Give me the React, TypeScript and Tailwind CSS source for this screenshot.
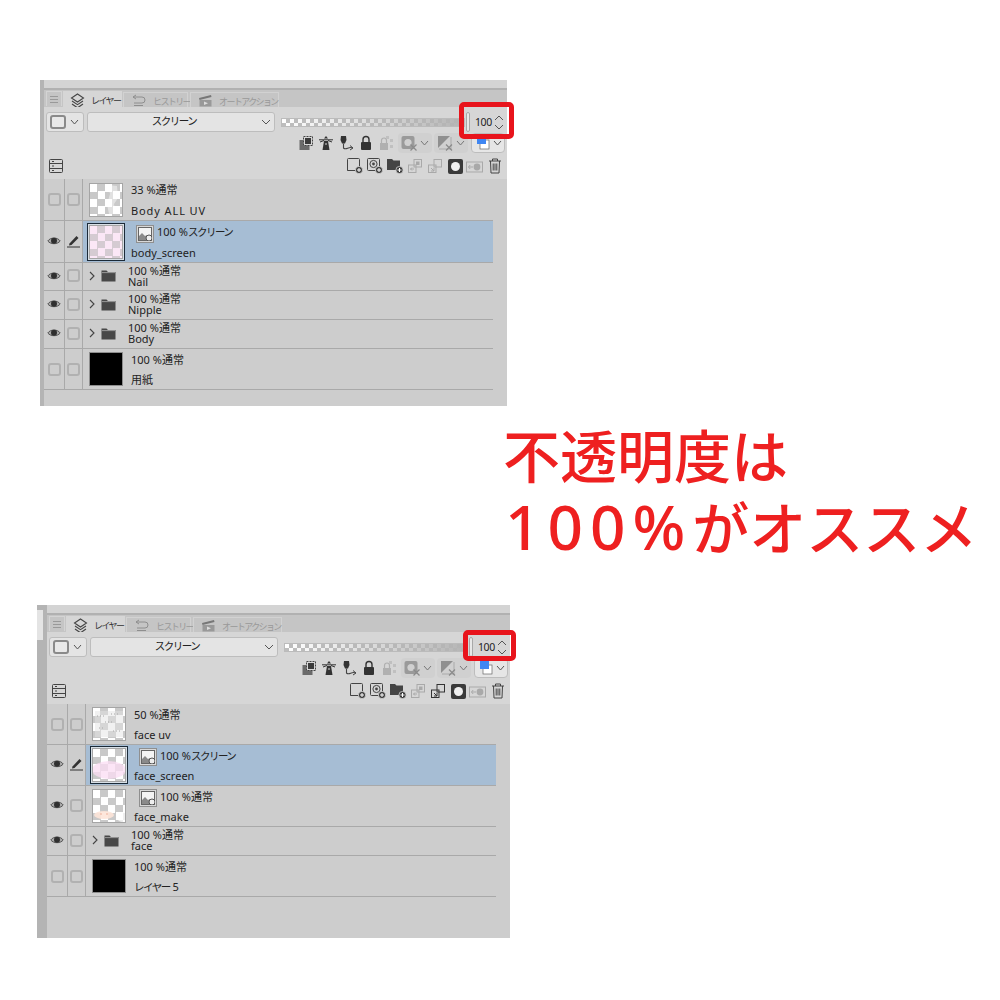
import type { ReactNode } from "react";

const line = "border-[#a9a9a9]";

function Svg({ w = 16, h = 16, children, className = "" }: { w?: number; h?: number; children: ReactNode; className?: string }) {
  return (
    <svg width={w} height={h} viewBox={`0 0 ${w} ${h}`} fill="none" className={`shrink-0 ${className}`}>
      {children}
    </svg>
  );
}

function Chevron({ up = false, color = "#555", w = 10 }: { up?: boolean; color?: string; w?: number }) {
  return (
    <Svg w={w} h={6}>
      <path d={up ? `M1 5 L${w / 2} 1 L${w - 1} 5` : `M1 1 L${w / 2} 5 L${w - 1} 1`} stroke={color} strokeWidth="1" />
    </Svg>
  );
}

function Plus({ x, y }: { x: number; y: number }) {
  return (
    <>
      <circle cx={x} cy={y} r="3.6" fill="#3c3c3c" stroke="#d6d6d6" strokeWidth="0.8" />
      <path d={`M${x - 2} ${y}h4M${x} ${y - 2}v4`} stroke="#fff" strokeWidth="1" />
    </>
  );
}

function Cross({ x, y, color = "#8a8a8a" }: { x: number; y: number; color?: string }) {
  return <path d={`M${x - 3} ${y - 3}l6 6M${x + 3} ${y - 3}l-6 6`} stroke={color} strokeWidth="1.2" />;
}

function LayersIcon() {
  return (
    <Svg w={15} h={16}>
      <path d="M7.5 1 L13.5 5 L7.5 9 L1.5 5 Z" stroke="#444" strokeWidth="1.1" />
      <path d="M2 8 L7.5 11.6 L13 8M2 11 L7.5 14.8 L13 11" stroke="#444" strokeWidth="1.1" />
    </Svg>
  );
}

function HistoryIcon() {
  return (
    <Svg w={15} h={13}>
      <path d="M5 1 L2 3 L5 5M2 3 H11 a3 3 0 0 1 0 6 H3 M3 11.5 H12" stroke="#8e8e8e" strokeWidth="1" />
    </Svg>
  );
}

function ActionIcon() {
  return (
    <Svg w={15} h={13}>
      <path d="M1 4 L13 1 L13.5 3 L1.5 6 Z" fill="#777" />
      <rect x="1.5" y="6" width="12" height="6.5" fill="#999" />
      <path d="M6 7.5 L10 9.2 L6 11 Z" fill="#ddd" />
    </Svg>
  );
}

function EyeIcon() {
  return (
    <Svg w={14} h={10}>
      <path d="M0.8 5 C3.5 1 10.5 1 13.2 5 C10.5 8.6 3.5 8.6 0.8 5 Z" stroke="#555" strokeWidth="1" fill="#aaa" />
      <circle cx="7" cy="4.7" r="3" fill="#2f2f2f" />
    </Svg>
  );
}

function PenIcon() {
  return (
    <Svg w={15} h={14}>
      <path d="M3.5 9.5 L10.5 2 L12.5 4 L5.5 11 L3 11.5 Z" fill="#333" />
      <path d="M1 13 H14" stroke="#333" strokeWidth="1" />
    </Svg>
  );
}

function FolderIcon() {
  return (
    <Svg w={15} h={13}>
      <path d="M0.5 1.5 H5.5 L7 3 H14.5 V12.5 H0.5 Z" fill="#484848" />
      <path d="M1 3.6 H14" stroke="#d0d0d0" strokeWidth="0.6" />
    </Svg>
  );
}

function MaskIcon() {
  return (
    <span className="flex h-[18px] w-[18px] shrink-0 items-center justify-center border border-[#8f8f8f] bg-[#d8d8d8]">
      <Svg w={14} h={14}>
        <rect x="0.5" y="0.5" width="13" height="13" fill="#f4f4f4" stroke="#666" />
        <path d="M1 13 V9 L4 6 L7 9 L9 8 L13 11 V13 Z" fill="#8a8a8a" />
        <circle cx="11" cy="11" r="3" fill="#eee" stroke="#555" />
      </Svg>
    </span>
  );
}

function EmptyBox() {
  return <span className="block h-[13px] w-[13px] rounded-[3px] border-2 border-[#b1b1b1]" />;
}

// katakana in the app's UI font is much narrower than the kanji
function Narrow({ text }: { text: string }) {
  return (
    <>
      {text.split(/([ァ-ヶー]+)/).map((part, i) =>
        /[ァ-ヶー]/.test(part) ? (
          <span key={i} className="text-[10.5px] tracking-[-1.5px]">
            {part}
          </span>
        ) : (
          part
        ),
      )}
    </>
  );
}

type ThumbKind = "uv" | "faceUv" | "pink" | "facePink" | "faceMake" | "black";

function Thumb({ kind }: { kind: ThumbKind }) {
  const checker =
    "bg-[repeating-conic-gradient(#c9c9c9_0_25%,#ffffff_0_50%)] bg-[length:15px_15px]";
  if (kind === "black") {
    return <div className="h-[34px] w-[34px] border border-[#8d8d8d] bg-black" />;
  }
  if (kind === "pink") {
    return (
      <div className="h-[34px] w-[34px] border border-[#a5a5a5] bg-[repeating-conic-gradient(#d5cbd2_0_25%,#fbe7f6_0_50%)] bg-[length:15px_15px]" />
    );
  }
  return (
    <div className={`relative h-[34px] w-[34px] overflow-hidden border border-[#a5a5a5] ${checker}`}>
      <svg width="32" height="32" viewBox="0 0 32 32" className="absolute inset-0">
        {kind === "uv" && (
          <path d="M18 1 L27 2 L28 14 L24 20 L26 30 L19 30 L17 20 L20 10 Z" fill="#fff" opacity="0.45" />
        )}
        {kind === "faceUv" && (
          <>
            <rect x="2" y="3" width="28" height="26" fill="#e4e4e4" opacity="0.5" />
            <path d="M4 8h8M18 6h9M6 20h6M20 23h7M12 14h8" stroke="#a8a8a8" strokeWidth="1" strokeDasharray="1 2" />
          </>
        )}
        {kind === "facePink" && <ellipse cx="16" cy="21" rx="17" ry="9" fill="#fbdcf3" opacity="0.75" />}
        {kind === "faceMake" && (
          <>
            <ellipse cx="11" cy="25" rx="10" ry="4" fill="#fde4d8" opacity="0.9" />
            <path d="M7 24h2M13 24h2" stroke="#eeb09a" strokeWidth="1" />
            <ellipse cx="29" cy="27" rx="5" ry="5" fill="#fff" opacity="0.7" />
          </>
        )}
      </svg>
    </div>
  );
}

type Row = {
  type: "layer" | "folder";
  mode: string;
  name: string;
  heightClass: string;
  eye?: boolean;
  pen?: boolean;
  selected?: boolean;
  mask?: boolean;
  thumb?: ThumbKind;
  spaced?: boolean;
  tight?: boolean;
};

function LayerRow({ row }: { row: Row }) {
  const lift = row.eye ? "pb-[2px]" : "";
  return (
    <div className={`flex w-[449px] border-b ${line} ${row.heightClass} ${row.selected ? "bg-[#a6bdd4]" : ""}`}>
      <div className={`flex w-[21px] shrink-0 items-center justify-center border-r bg-[#cdcdcd] ${line} ${lift}`}>
        {row.eye ? <EyeIcon /> : <EmptyBox />}
      </div>
      <div className={`flex w-[18px] shrink-0 items-center justify-center border-r bg-[#cdcdcd] ${line} ${lift}`}>
        {row.pen ? <PenIcon /> : <EmptyBox />}
      </div>
      {row.type === "folder" ? (
        <div className="flex min-w-0 flex-1 items-center pb-[2px] pl-[5px]">
          <span className="w-[13px] pl-[1px]">
            <Svg w={6} h={10}>
              <path d="M1 1 L5 5 L1 9" stroke="#444" strokeWidth="1.1" />
            </Svg>
          </span>
          <FolderIcon />
          <div className="ml-[12px] flex flex-col text-[11px] leading-[11px] text-[#222]">
            <span>{row.mode}</span>
            <span>{row.name}</span>
          </div>
        </div>
      ) : (
        <div className="flex min-w-0 flex-1 items-center pl-[6px]">
          {row.selected ? (
            <div className="-ml-[2px] mr-[6px] border border-[#1b2a38] bg-[#d8dfe6] p-[1px]">
              <Thumb kind={row.thumb ?? "uv"} />
            </div>
          ) : (
            <div className="mr-[8px]">
              <Thumb kind={row.thumb ?? "uv"} />
            </div>
          )}
          <div className={`flex flex-col text-[11px] leading-[14px] text-[#222] ${row.tight ? "mb-[1px]" : ""}`}>
            {row.mask ? (
              <div className="flex h-[20px] items-center">
                <span className="ml-[5px] mr-[3px]">
                  <MaskIcon />
                </span>
                <span className="-mt-[3px]">
                  <Narrow text={row.mode} />
                </span>
              </div>
            ) : (
              <span className="mt-[2px] h-[18px]">
                <Narrow text={row.mode} />
              </span>
            )}
            <span className={`${row.mask || row.tight ? "mt-[2px]" : "mt-[3px]"} ${row.spaced ? "tracking-[0.9px]" : ""}`}>
              <Narrow text={row.name} />
            </span>
          </div>
        </div>
      )}
    </div>
  );
}

function IconSlot({ children }: { children: ReactNode }) {
  return <span className="flex w-5 shrink-0 items-center justify-center">{children}</span>;
}

function ToolRowTop() {
  return (
    <div className="flex h-[20px] items-center justify-end">
      <IconSlot>
        <Svg>
          <rect x="1.5" y="5" width="10" height="10" fill="#6a6a6a" />
          <rect x="5.5" y="1.5" width="9" height="9" fill="#d6d6d6" stroke="#444" strokeDasharray="2 1" />
          <rect x="7" y="3" width="6" height="6" fill="#3a3a3a" />
        </Svg>
      </IconSlot>
      <IconSlot>
        <Svg>
          <path d="M8 1 L10 3.5 H6 Z" fill="#333" />
          <path d="M1 4.8 H15 M2 7 L6 5.5 M14 7 L10 5.5" stroke="#333" />
          <path d="M6 6 H10 L11.5 15 H4.5 Z" fill="#333" />
          <path d="M7 9h2" stroke="#d6d6d6" />
        </Svg>
      </IconSlot>
      <IconSlot>
        <Svg>
          <path d="M3 1 H8 L8.5 5 L7 8.5 H4 L2.5 5 Z" fill="#333" />
          <path d="M5.5 8.5 V13 C8 15.5 11 11 14.5 13" stroke="#444" strokeWidth="1.1" />
          <path d="M12 10.5 L15 13 L12 15" stroke="#444" />
        </Svg>
      </IconSlot>
      <IconSlot>
        <Svg>
          <path d="M5 7 V4.5 a3 3 0 0 1 6 0 V7" stroke="#333" strokeWidth="1.4" />
          <rect x="3" y="7" width="10" height="8" rx="1" fill="#333" />
        </Svg>
      </IconSlot>
      <IconSlot>
        <Svg>
          <path d="M3.5 8 V5.5 a2.5 2.5 0 0 1 5 0 V8" stroke="#b0b0b0" strokeWidth="1.2" />
          <rect x="2" y="8" width="8" height="7" fill="#b0b0b0" />
          <path d="M8 1h3v3H8zM12 4h3v3h-3zM12 10h3v3h-3z" fill="#c0c0c0" />
        </Svg>
      </IconSlot>
      <span className="ml-[2px] flex h-[20px] w-[34px] items-center gap-[3px] rounded-sm bg-[#d0d0d0] pl-[3px]">
        <Svg>
          <rect x="0.5" y="1" width="13" height="13" rx="2" fill="#9a9a9a" />
          <circle cx="7" cy="7.5" r="3.6" fill="#d0d0d0" />
          <Cross x={12.5} y={12.5} />
        </Svg>
        <Chevron color="#777" w={9} />
      </span>
      <span className="ml-[2px] flex h-[20px] w-[34px] items-center gap-[3px] rounded-sm bg-[#d0d0d0] pl-[3px]">
        <Svg>
          <path d="M1 1 H13 L1 13 Z" fill="#8f8f8f" />
          <path d="M14 2 V14 H2" stroke="#aaa" />
          <Cross x={12} y={12.5} />
        </Svg>
        <Chevron color="#777" w={9} />
      </span>
      <span className="ml-[3px] flex h-[20px] w-[34px] items-center gap-[3px] rounded-sm border border-[#bdbdbd] bg-[#e6e6e6] pl-[5px]">
        <Svg w={13} h={14}>
          <rect x="3" y="4" width="9" height="9" fill="#fff" stroke="#666" strokeWidth="0.7" />
          <rect x="0" y="0" width="9" height="8" fill="#3f86f2" />
        </Svg>
        <Chevron w={9} />
      </span>
    </div>
  );
}

function ToolRowBottom({ mergeActive }: { mergeActive: boolean }) {
  const fade = "#a9a9a9";
  const merge = mergeActive ? "#333" : fade;
  return (
    <div className="flex h-[20px] items-center justify-between pl-[2px]">
      <Svg>
        <rect x="1.5" y="1.5" width="13" height="13" rx="1" stroke="#444" />
        <path d="M2 5.5h12M2 10.5h12" stroke="#444" />
        <path d="M4 3.5h2M4 8h2M4 12.5h2" stroke="#444" />
      </Svg>
      <div className="flex items-center">
        <IconSlot>
          <Svg w={18} h={18}>
            <rect x="1.5" y="1.5" width="12" height="12" rx="1" stroke="#444" />
            <path d="M1.5 10 L1.5 13.5 L6 13.5" stroke="#444" />
            <Plus x={13} y={13} />
          </Svg>
        </IconSlot>
        <IconSlot>
          <Svg w={18} h={18}>
            <rect x="1.5" y="1.5" width="12" height="12" rx="1" stroke="#444" />
            <circle cx="7.5" cy="7" r="3.6" stroke="#444" />
            <circle cx="7.5" cy="7" r="1.4" fill="#444" />
            <Plus x={13} y={13} />
          </Svg>
        </IconSlot>
        <IconSlot>
          <Svg w={18} h={18}>
            <path d="M1 2 H6 L7.5 3.5 H14 V13 H1 Z" fill="#444" />
            <Plus x={13.5} y={13} />
          </Svg>
        </IconSlot>
        <IconSlot>
          <Svg>
            <rect x="7" y="1.5" width="7.5" height="7.5" stroke={fade} />
            <rect x="9" y="3.5" width="3.5" height="3.5" fill={fade} />
            <rect x="1.5" y="7" width="7.5" height="7.5" stroke={fade} />
            <path d="M7 11 H3.5 M5 9.5 L3.5 11 L5 12.5" stroke={fade} />
          </Svg>
        </IconSlot>
        <IconSlot>
          <Svg>
            <rect x="7" y="1.5" width="7.5" height="7.5" stroke={merge} />
            <rect x="1.5" y="7" width="7.5" height="7.5" stroke={merge} />
            <path d="M4 10 L7 13 M4 13 H7 V10" stroke={merge} />
          </Svg>
        </IconSlot>
        <IconSlot>
          <span className="flex h-[15px] w-[15px] items-center justify-center rounded-[2px] bg-[#3a3a3a]">
            <span className="h-[9px] w-[9px] rounded-full bg-[#f0f0f0]" />
          </span>
        </IconSlot>
        <IconSlot>
          <Svg w={18} h={14}>
            <rect x="0.5" y="3" width="16" height="10" stroke={fade} />
            <circle cx="11" cy="8" r="3.4" fill={fade} />
            <path d="M7 8 H2.5 M4.2 6 L2.5 8 L4.2 10" stroke={fade} />
          </Svg>
        </IconSlot>
        <IconSlot>
          <Svg w={14} h={16}>
            <path d="M1 3 H13 M4.5 3 V1 H9.5 V3" stroke="#444" />
            <path d="M2.5 3 L3 15 H11 L11.5 3" stroke="#444" />
            <path d="M5.2 5.5 V12.5 M7 5.5 V12.5 M8.8 5.5 V12.5" stroke="#444" />
          </Svg>
        </IconSlot>
      </div>
    </div>
  );
}

function Panel({ rows, className, wideStrip = false, mergeActive = false }: { rows: Row[]; className: string; wideStrip?: boolean; mergeActive?: boolean }) {
  return (
    <div className={`flex w-fit text-[11px] ${className}`}>
      {wideStrip ? (
        <div className="flex w-[10px] flex-col bg-[#b4b4b4] pt-[5px]">
          <div className="h-[30px] w-[6px] bg-[#e4e4e4]" />
        </div>
      ) : (
        <div className="w-[4px] bg-[#b4b4b4]" />
      )}
      <div className="flex w-[463px] flex-col bg-[#cdcdcd]">
        <div className="h-[8px] bg-[#d4d4d4]" />
        <div className="h-[2px] bg-[#b1b1b1]" />
        {/* tab strip */}
        <div className="flex h-[17px] items-end gap-[1px] bg-[#c5c5c5] pl-[2px] text-[9px] leading-[12px] tracking-[-1.6px]">
          <div className="mb-[1px] flex h-[15px] w-[16px] items-center justify-center border border-b-0 border-[#d4d4d4]">
            <Svg w={8} h={7}>
              <path d="M0 .5h8M0 3.5h8M0 6.5h8" stroke="#999" />
            </Svg>
          </div>
          <div className="flex h-[16px] w-[59px] items-center gap-[6px] bg-[#d6d6d6] pl-[7px] text-[#333]">
            <span className="mt-[3px]">
              <LayersIcon />
            </span>
            <span className="mt-[3px] whitespace-nowrap">レイヤー</span>
          </div>
          <div className="flex h-[15px] w-[65px] items-center gap-[7px] border border-b-0 border-[#d2d2d2] pl-[7px] text-[#999]">
            <HistoryIcon />
            <span className="mt-[3px] whitespace-nowrap">ヒストリー</span>
          </div>
          <div className="ml-[1px] flex h-[15px] w-[89px] items-center gap-[6px] border border-b-0 border-[#d2d2d2] pl-[7px] text-[#999]">
            <ActionIcon />
            <span className="mt-[3px] whitespace-nowrap">オートアクション</span>
          </div>
        </div>
        {/* toolbar */}
        <div className="flex h-[72px] flex-col bg-[#d6d6d6] px-[2px] pt-[5px]">
          <div className="flex h-[20px] items-center">
            <div className="flex h-[20px] w-[38px] items-center gap-[4px] rounded-[3px] border border-[#bdbdbd] bg-[#e4e4e4] pl-[3px]">
              <span className="h-[14px] w-[16px] rounded-[3px] border-2 border-[#8a8a8a] bg-[#e8e8e8]" />
              <Chevron w={9} />
            </div>
            <div className="relative ml-[3px] flex h-[20px] w-[188px] items-center justify-center rounded-[3px] border border-[#bdbdbd] bg-[#e4e4e4] pr-[14px] text-[#222]">
              <Narrow text="スクリーン" />
              <span className="absolute right-[3px] top-[6px]">
                <Chevron w={10} />
              </span>
            </div>
            <div className="ml-[6px] h-[9px] w-[184px] border border-[#bbb] bg-[linear-gradient(90deg,rgba(214,214,214,0)_0%,#b4b4b4_100%),repeating-conic-gradient(#bdbdbd_0_25%,#fff_0_50%)] bg-[length:100%_100%,8px_8px]" />
            <span className="ml-[1px] h-[20px] w-[4px] rounded-sm border border-[#a8a8a8] bg-[#e8e8e8]" />
            <span className="ml-[5px] w-[18px] text-[10.5px] leading-[14px] tracking-[-0.4px] text-[#222]">100</span>
            <span className="ml-[1px] flex flex-col gap-[3px]">
              <Chevron up w={10} />
              <Chevron w={10} />
            </span>
          </div>
          <div className="mt-[1px]">
            <ToolRowTop />
          </div>
          <div className="mt-[3px]">
            <ToolRowBottom mergeActive={mergeActive} />
          </div>
        </div>
        {/* layer list */}
        <div className="flex flex-col">
          {rows.map((row) => (
            <LayerRow key={row.name} row={row} />
          ))}
        </div>
      </div>
    </div>
  );
}

const upperRows: Row[] = [
  { type: "layer", heightClass: "h-[42px]", mode: "33 %通常", name: "Body ALL UV", thumb: "uv", spaced: true },
  { type: "layer", heightClass: "h-[42px]", mode: "100 %スクリーン", name: "body_screen", thumb: "pink", eye: true, pen: true, selected: true, mask: true },
  { type: "folder", heightClass: "h-[28px]", mode: "100 %通常", name: "Nail", eye: true },
  { type: "folder", heightClass: "h-[29px]", mode: "100 %通常", name: "Nipple", eye: true },
  { type: "folder", heightClass: "h-[29px]", mode: "100 %通常", name: "Body", eye: true },
  { type: "layer", heightClass: "h-[41px]", mode: "100 %通常", name: "用紙", thumb: "black", tight: true },
];

const lowerRows: Row[] = [
  { type: "layer", heightClass: "h-[41px]", mode: "50 %通常", name: "face uv", thumb: "faceUv", tight: true },
  { type: "layer", heightClass: "h-[41px]", mode: "100 %スクリーン", name: "face_screen", thumb: "facePink", eye: true, pen: true, selected: true, mask: true },
  { type: "layer", heightClass: "h-[41px]", mode: "100 %通常", name: "face_make", thumb: "faceMake", eye: true, mask: true },
  { type: "folder", heightClass: "h-[29px]", mode: "100 %通常", name: "face", eye: true },
  { type: "layer", heightClass: "h-[41px]", mode: "100 %通常", name: "レイヤー 5", thumb: "black", tight: true },
];

export default function App() {
  return (
    <div className="relative h-[1000px] w-[1000px] overflow-hidden bg-white pt-[80px] font-['Noto_Sans','Noto_Sans_CJK_JP',sans-serif]">
      <Panel rows={upperRows} className="ml-[40px] h-[326px]" />
      <div className="ml-[503px] mt-[15px] h-[142px] whitespace-nowrap text-[57px] font-medium leading-[70px] text-[#ee2020]">
        <div>不透明度は</div>
        <div>
          <span className="ml-[2px] text-[62px] tracking-[7px]">100%</span>がオススメ
        </div>
      </div>
      <Panel rows={lowerRows} wideStrip mergeActive className="ml-[37px] mt-[42px] h-[333px]" />
      {/* red call-outs over the opacity field */}
      <div className="absolute left-[459px] top-[102px] h-[37px] w-[55px] rounded-[5px] border-[5px] border-[#e8141c]" />
      <div className="absolute left-[463px] top-[630px] h-[31px] w-[53px] rounded-[5px] border-[5px] border-[#e8141c]" />
    </div>
  );
}
